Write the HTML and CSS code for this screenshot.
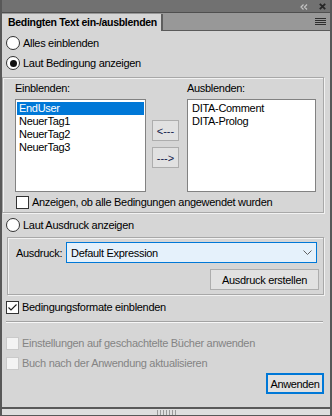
FILE: index.html
```html
<!DOCTYPE html>
<html lang="de">
<head>
<meta charset="utf-8">
<title>Bedingten Text ein-/ausblenden</title>
<link rel="stylesheet" href="styles.css">
</head>
<body>
<div class="panel">
  <div class="titlebar">
    <svg class="ico-collapse" width="8" height="6" viewBox="0 0 8 6"><path d="M3.5 0.5 L1 3 L3.5 5.5 M7 0.5 L4.5 3 L7 5.5" fill="none" stroke="#c4c4c4" stroke-width="1.2"/></svg>
    <svg class="ico-close" width="7" height="7" viewBox="0 0 7 7"><path d="M0.8 0.8 L6.2 6.2 M6.2 0.8 L0.8 6.2" fill="none" stroke="#262626" stroke-width="1.8"/></svg>
  </div>
  <div class="tabbar">
    <div class="tab">Bedingten Text ein-/ausblenden</div>
    <svg class="ico-menu" width="11" height="8" viewBox="0 0 11 8"><path d="M0 0.5 H11 M0 2.5 H11 M0 4.5 H11 M0 6.5 H11" stroke="#2e2e2e" stroke-width="1"/></svg>
  </div>
  <div class="content">
    <div class="row"><span class="radio"></span><span>Alles einblenden</span></div>
    <div class="row"><span class="radio checked"></span><span>Laut Bedingung anzeigen</span></div>
    <div class="group group-cond">
      <div class="lists">
        <div class="lbl">Einblenden:</div>
        <div></div>
        <div class="lbl">Ausblenden:</div>
        <div class="listbox">
          <div class="item sel">EndUser</div>
          <div class="item">NeuerTag1</div>
          <div class="item">NeuerTag2</div>
          <div class="item">NeuerTag3</div>
        </div>
        <div class="arrows">
          <div class="btn arrow">&lt;---</div>
          <div class="btn arrow">---&gt;</div>
        </div>
        <div class="listbox">
          <div class="item">DITA-Comment</div>
          <div class="item">DITA-Prolog</div>
        </div>
      </div>
      <div class="row check-row"><span class="check"></span><span>Anzeigen, ob alle Bedingungen angewendet wurden</span></div>
    </div>
    <div class="row row-expr"><span class="radio"></span><span>Laut Ausdruck anzeigen</span></div>
    <div class="group group-expr">
      <div class="expr-row">
        <span class="expr-lbl">Ausdruck:</span>
        <div class="select"><span>Default Expression</span>
          <svg width="9" height="5" viewBox="0 0 9 5"><path d="M0.5 0.5 L4.5 4.5 L8.5 0.5" fill="none" stroke="#606060" stroke-width="1"/></svg>
        </div>
      </div>
      <div class="btn-row"><div class="btn btn-make">Ausdruck erstellen</div></div>
    </div>
    <div class="row row-formats"><span class="check checked"><svg width="11" height="11" viewBox="0 0 11 11"><path d="M1.5 5.5 L4 8 L9.5 2.5" fill="none" stroke="#1a1a1a" stroke-width="1.1"/></svg></span><span>Bedingungsformate einblenden</span></div>
    <div class="sep"></div>
    <div class="row disabled row-d1"><span class="check"></span><span>Einstellungen auf geschachtelte Bücher anwenden</span></div>
    <div class="row disabled"><span class="check"></span><span>Buch nach der Anwendung aktualisieren</span></div>
    <div class="footer"><div class="btn btn-default">Anwenden</div></div>
  </div>
  <div class="statusbar"><span class="grip"></span></div>
</div>
</body>
</html>
```
FILE: styles.css
```css
* { box-sizing: border-box; margin: 0; padding: 0; }
html, body { width: 332px; height: 416px; overflow: hidden; background: #d6d6d6; }
body {
  font-family: "Liberation Sans", Arial, sans-serif;
  font-size: 11px;
  letter-spacing: -0.3px;
  color: #000;
}
.panel {
  width: 332px;
  height: 416px;
  display: flex;
  flex-direction: column;
  border-left: 2px solid #585858;
  border-right: 2px solid #585858;
  border-bottom: 1px solid #585858;
  background: #d6d6d6;
}
.titlebar {
  height: 13px;
  flex: none;
  background: #717171;
  border-bottom: 1px solid #4f4f4f;
  display: flex;
  align-items: center;
  justify-content: flex-end;
  padding-right: 4px;
  gap: 11px;
}
.ico-collapse { margin-top: 1px; }
.ico-close { margin-top: 1px; }
.tabbar {
  height: 18px;
  flex: none;
  background: #989898;
  border-bottom: 1px solid #5a5a5a;
  display: flex;
  align-items: flex-end;
  justify-content: space-between;
  padding-right: 4px;
}
.tab {
  height: 17px;
  margin-bottom: -1px;
  width: 161px;
  background: #d6d6d6;
  border-right: 2px solid #5e5e5e;
  font-weight: bold;
  font-size: 10.5px;
  line-height: 17px;
  padding-left: 6px;
  white-space: nowrap;
}
.ico-menu { align-self: center; margin-top: 1px; }
.content {
  flex: 1;
  display: flex;
  flex-direction: column;
  padding: 2px 6px 0 4px;
}
.row {
  height: 20px;
  display: flex;
  align-items: center;
  gap: 3px;
  white-space: nowrap;
  flex: none;
}
.radio {
  width: 14px;
  height: 14px;
  border-radius: 50%;
  border: 1px solid #333;
  background: #fff;
  display: flex;
  align-items: center;
  justify-content: center;
  flex: none;
}
.radio.checked::after {
  content: "";
  width: 7px;
  height: 7px;
  border-radius: 50%;
  background: #111;
}
.check {
  width: 13px;
  height: 13px;
  border: 1px solid #333;
  background: #fff;
  display: flex;
  align-items: center;
  justify-content: center;
  flex: none;
}
.group {
  border: 1px solid #a8a8a8;
  box-shadow: 1px 1px 0 #f2f2f2, inset 1px 1px 0 #f2f2f2;
  flex: none;
}
.group-cond {
  margin-top: 4px;
  margin-left: -4px;
  height: 136px;
  padding: 4px 5px 0 12px;
}
.lists {
  display: grid;
  grid-template-columns: 131px 27px 131px;
  grid-template-rows: 13px 93px;
  column-gap: 6px;
  row-gap: 4px;
}
.lists .lbl { line-height: 13px; }
.lists > .lbl:nth-child(3) { margin-left: 2px; }
.lists > :nth-child(6) { margin-left: 2px; }
.listbox {
  background: #fff;
  border: 1px solid #828282;
  padding: 2px 1px;
}
.item {
  height: 13px;
  line-height: 13px;
  padding-left: 2px;
  white-space: nowrap;
}
.listbox + .arrows + .listbox .item { padding-left: 3px; }
.item.sel { background: #0078d7; color: #fff; }
.arrows {
  display: flex;
  flex-direction: column;
  gap: 6px;
  padding-top: 21px;
}
.btn {
  background: #e1e1e1;
  border: 1px solid #adadad;
  height: 21px;
  display: flex;
  align-items: center;
  justify-content: center;
  white-space: nowrap;
}
.arrow { color: #111a4a; letter-spacing: 0; }
.check-row { padding-left: 1px; }
.row-expr { margin-top: 2px; }
.group-expr {
  margin-top: 2px;
  margin-left: 1px;
  height: 58px;
  padding: 4px 6px 0 8px;
}
.expr-row {
  display: flex;
  align-items: center;
  height: 21px;
}
.expr-lbl { width: 50px; }
.select {
  flex: 1;
  height: 21px;
  background: #e5f1fb;
  border: 1px solid #0078d7;
  display: flex;
  align-items: center;
  justify-content: space-between;
  padding: 0 4px 0 4px;
}
.btn-row {
  display: flex;
  justify-content: flex-end;
  margin-top: 6px;
  margin-right: -2px;
}
.btn-make { width: 109px; }
.row-formats { margin-top: 2px; }
.sep {
  height: 2px;
  margin-top: 4px;
  border-top: 1px solid #a3a3a3;
  border-bottom: 1px solid #f7f7f7;
  margin-right: 1px;
  flex: none;
}
.row-d1 { margin-top: 10px; }
.disabled { color: #848484; }
.disabled .check { background: #f3f3f3; border-color: #cacaca; }
.footer {
  display: flex;
  justify-content: flex-end;
}
.btn-default {
  width: 58px;
  border: 2px solid #0078d7;
  letter-spacing: -0.4px;
}
.statusbar {
  height: 8px;
  flex: none;
  border-top: 2px solid #595959;
  background: #dedede;
  display: flex;
  justify-content: center;
}
.grip {
  width: 20px;
  height: 5px;
  margin-top: 1px;
  margin-left: 2px;
  background: repeating-linear-gradient(90deg, #9a9a9a 0 1px, transparent 1px 3px);
}
```
